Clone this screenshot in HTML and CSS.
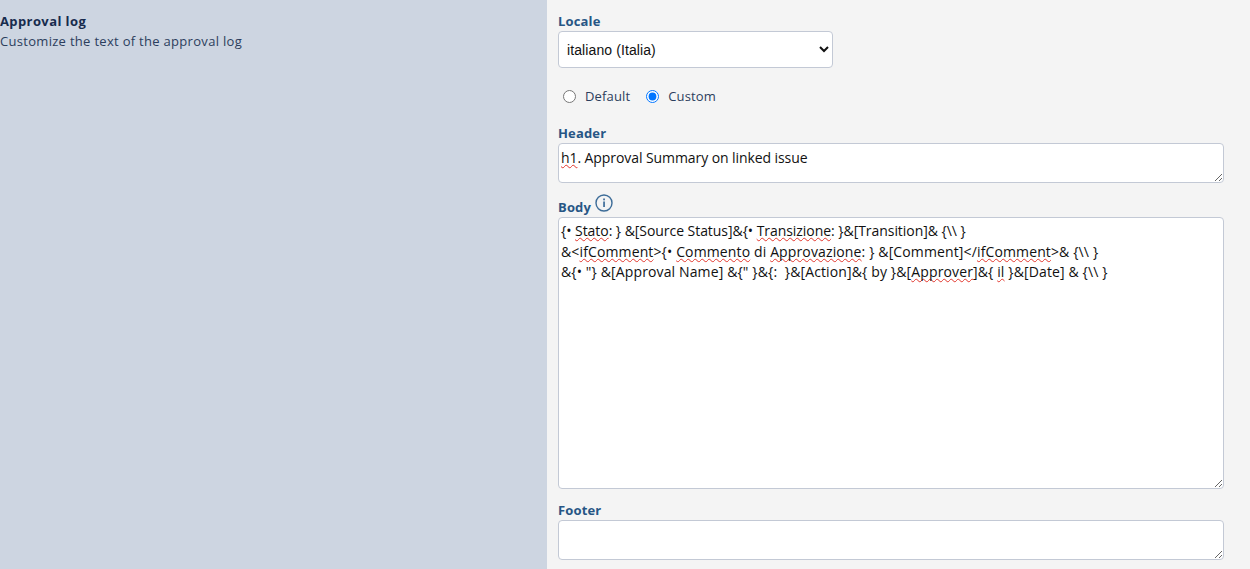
FILE: index.html
```html
<!DOCTYPE html>
<html lang="en">
<head>
<meta charset="utf-8">
<title>Approval log</title>
<link rel="stylesheet" href="styles.css">
</head>
<body>
<main class="layout">
  <aside class="side">
    <h2 class="side-title">Approval log</h2>
    <p class="side-desc">Customize the text of the approval log</p>
  </aside>
  <section class="form">
    <label class="field-label">Locale</label>
    <select class="locale"><option>italiano (Italia)</option></select>
    <div class="radios">
      <label class="radio"><input type="radio" name="mode"><span>Default</span></label>
      <label class="radio"><input type="radio" name="mode" checked><span>Custom</span></label>
    </div>
    <label class="field-label header-label">Header</label>
    <div class="area area-header"><span class="sp">h1</span>. Approval Summary on linked issue</div>
    <div class="field-label body-label"><span class="body-text">Body</span>
      <svg class="info" width="20" height="20" viewBox="0 0 20 20"><circle cx="10" cy="10" r="8" fill="none" stroke="#3d6c98" stroke-width="1.4"/><rect x="9.2" y="8.5" width="1.7" height="5.5" fill="#3d6c98"/><rect x="9.2" y="5.5" width="1.7" height="1.8" fill="#3d6c98"/></svg>
    </div>
    <div class="area area-body">
      <div class="line line-a">{• <span class="sp">Stato</span>: } &amp;[Source Status]&amp;{• <span class="sp">Transizione</span>: }&amp;[Transition]&amp; {\\ }</div>
      <div class="line line-b">&amp;&lt;<span class="sp">ifComment</span>&gt;{• <span class="sp">Commento</span> di <span class="sp">Approvazione</span>: } &amp;[Comment]&lt;/<span class="sp">ifComment</span>&gt;&amp; {\\ }</div>
      <div class="line line-b">&amp;{• "} &amp;[Approval Name] &amp;{" }&amp;{:&nbsp; }&amp;[Action]&amp;{ by }&amp;[<span class="sp">Approver</span>]&amp;{ <span class="sp">il</span> }&amp;[Date] &amp; {\\ }</div>
    </div>
    <label class="field-label footer-label">Footer</label>
    <div class="area area-footer"></div>
  </section>
</main>
</body>
</html>
```
FILE: styles.css
```css
* { box-sizing: border-box; }
html, body { margin: 0; height: 100%; overflow: hidden; }
body { font-family: "Open Sans", "Noto Sans", sans-serif; font-size: 14px; color: #172b4d; }
.layout { display: flex; height: 569px; }
.side { width: 547px; flex: none; background: #cdd5e1; padding-top: 12px; }
.side-title { margin: 0; font-size: 13px; line-height: 18px; font-weight: 700; color: #172b4d; letter-spacing: .4px; }
.side-desc { margin: 2px 0 0; font-size: 13px; line-height: 18px; color: #2c3e5d; letter-spacing: .3px; }
.form { flex: 1; background: #f4f4f4; padding: 12px 0 0 11px; }
.field-label { display: block; font-size: 13px; line-height: 18px; font-weight: 700; color: #275685; letter-spacing: .15px; }
.locale { display: block; width: 275px; height: 37px; margin-top: 1px; padding: 0 4px; font-family: "Liberation Sans", sans-serif; font-size: 14px; letter-spacing: .1px; color: #111; background-color: #fff; border: 1px solid #c3c9d5; border-radius: 4px; }
.radios { display: flex; gap: 16px; margin: 18px 0 0 5px; height: 20px; align-items: center; }
.radio { display: flex; align-items: center; gap: 9px; font-size: 13px; color: #2c3e5d; letter-spacing: .15px; }
.radio input { margin: 0; width: 13px; height: 13px; }
.header-label { margin-top: 18px; }
.area { width: 666px; padding: 4px 2px; background: #fff; border: 1px solid #c3c9d5; border-radius: 4px; font-size: 14px; line-height: 20.5px; color: #111; resize: both; overflow: auto; white-space: nowrap; }
.area-header { height: 40px; margin-top: 1px; letter-spacing: -.08px; }
.body-label { display: flex; align-items: flex-end; gap: 3px; height: 24px; margin-top: 9px; margin-bottom: 1px; line-height: 18px; }
.body-text { display: block; }
.info { margin-bottom: 3px; }
.area-body { height: 272px; padding-top: 3px; }
.line-a { letter-spacing: -.05px; }
.line-b { letter-spacing: .13px; }
.footer-label { margin-top: 12px; }
.area-footer { height: 40px; margin-top: 1px; }
.sp { text-decoration: underline wavy #e2362c 1px; text-underline-offset: 1px; text-decoration-skip-ink: none; }
```
